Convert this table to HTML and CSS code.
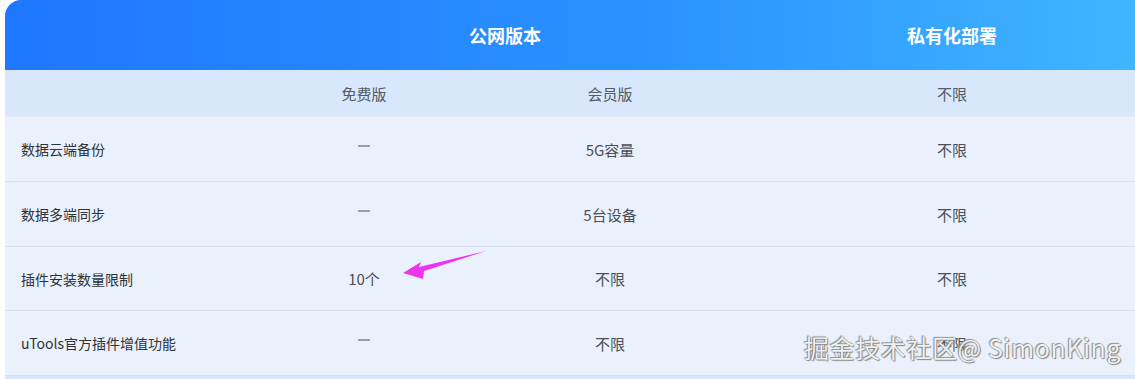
FILE: index.html
```html
<!DOCTYPE html>
<html lang="zh-CN">
<head>
<meta charset="utf-8">
<link rel="stylesheet" href="styles.css">
</head>
<body>
<div class="page">
  <div class="table">
    <div class="row head">
      <div class="cell"></div>
      <div class="cell public">公网版本</div>
      <div class="cell">私有化部署</div>
    </div>
    <div class="row sub">
      <div class="cell"></div>
      <div class="cell">免费版</div>
      <div class="cell">会员版</div>
      <div class="cell">不限</div>
    </div>
    <div class="row body">
      <div class="cell label">数据云端备份</div>
      <div class="cell"><span class="dash"></span></div>
      <div class="cell">5G容量</div>
      <div class="cell">不限</div>
    </div>
    <div class="row body">
      <div class="cell label">数据多端同步</div>
      <div class="cell"><span class="dash"></span></div>
      <div class="cell">5台设备</div>
      <div class="cell">不限</div>
    </div>
    <div class="row body short">
      <div class="cell label">插件安装数量限制</div>
      <div class="cell">10个</div>
      <div class="cell">不限</div>
      <div class="cell">不限</div>
    </div>
    <div class="row body">
      <div class="cell label">uTools官方插件增值功能</div>
      <div class="cell"><span class="dash"></span></div>
      <div class="cell">不限</div>
      <div class="cell">不限</div>
    </div>
    <div class="foot"></div>
  </div>
  <svg class="arrow" width="90" height="34" viewBox="0 0 90 34">
    <polygon points="3,25 21,14 19,19 86,3 24,23 23,31" fill="#ee33ee"/>
  </svg>
  <div class="watermark">掘金技术社区@ SimonKing</div>
</div>
</body>
</html>
```
FILE: styles.css
```css
html, body {
  margin: 0;
  padding: 0;
  overflow: hidden;
  background: #ffffff;
}
body {
  font-family: "Noto Sans CJK SC", "Noto Sans", sans-serif;
  width: 1135px;
  height: 379px;
}
.page {
  position: relative;
  width: 1135px;
  height: 379px;
  overflow: hidden;
}
.table {
  margin-left: 5px;
  width: 1166px;
  border-top-left-radius: 16px;
  overflow: hidden;
  background: #eaf1fd;
}
.row {
  display: grid;
  grid-template-columns: 236px 246px 246px 438px;
  align-items: center;
}
.cell {
  text-align: center;
  display: flex;
  align-items: center;
  justify-content: center;
}
.head {
  grid-template-columns: 236px 492px 438px;
  height: 70px;
  background: linear-gradient(90deg, #1e78ff 0%, #2a92ff 55%, #40b5ff 97%);
  color: #ffffff;
  font-size: 18px;
  font-weight: 700;
}
.head .public {
  padding-left: 36px;
}
.sub {
  height: 47px;
  background: #d8e7fc;
  color: #555a63;
  font-size: 15px;
  border-bottom: 1px solid #e3ebf8;
  box-sizing: border-box;
}
.body {
  height: 65px;
  box-sizing: border-box;
  border-bottom: 1px solid #d5dff0;
  color: #4a4f57;
  font-size: 15px;
}
.short {
  height: 64px;
}
.body .label {
  justify-content: flex-start;
  padding-left: 16px;
  color: #2f3338;
  font-size: 14px;
}
.dash {
  display: block;
  width: 12px;
  height: 2px;
  background: #9a9ea6;
  margin-top: -6px;
}
.foot {
  height: 6px;
  background: #d6e6fb;
}
.arrow {
  position: absolute;
  left: 400px;
  top: 248px;
}
.watermark {
  position: absolute;
  left: 804px;
  top: 330px;
  font-size: 25px;
  line-height: 34px;
  color: rgba(255, 255, 255, 0.92);
  text-shadow: 0 0 1px #666, 1px 1px 1px #888, -1px -1px 1px #999;
  letter-spacing: 0.6px;
  white-space: nowrap;
}
```
